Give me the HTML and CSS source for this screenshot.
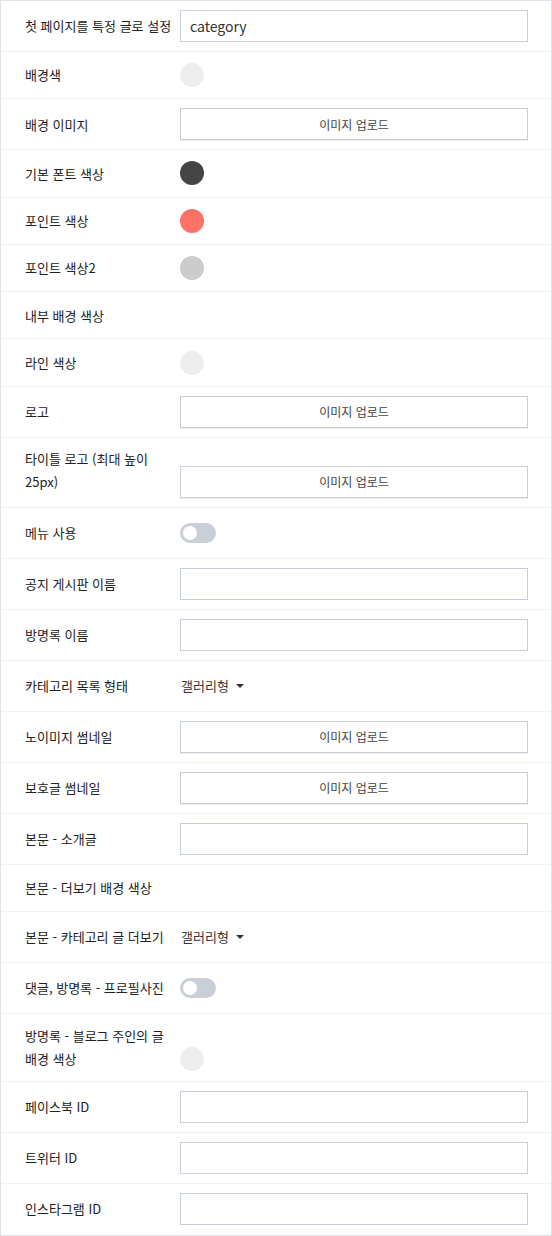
FILE: index.html
```html
<!DOCTYPE html>
<html lang="ko">
<head>
<meta charset="utf-8">
<title>스킨 설정</title>
<link rel="stylesheet" href="styles.css">
</head>
<body>
<div class="panel">
  <div class="row"><div class="label">첫 페이지를 특정 글로 설정</div><div class="control"><input class="field" type="text" value="category"></div></div>
  <div class="row"><div class="label">배경색</div><div class="control"><span class="swatch-wrap"><span class="swatch swatch--light"></span></span></div></div>
  <div class="row"><div class="label">배경 이미지</div><div class="control"><button class="upload" type="button">이미지 업로드</button></div></div>
  <div class="row"><div class="label">기본 폰트 색상</div><div class="control"><span class="swatch-wrap"><span class="swatch swatch--dark"></span></span></div></div>
  <div class="row"><div class="label">포인트 색상</div><div class="control"><span class="swatch-wrap"><span class="swatch swatch--coral"></span></span></div></div>
  <div class="row"><div class="label">포인트 색상2</div><div class="control"><span class="swatch-wrap"><span class="swatch swatch--gray"></span></span></div></div>
  <div class="row"><div class="label">내부 배경 색상</div><div class="control"><span class="swatch-wrap"></span></div></div>
  <div class="row"><div class="label">라인 색상</div><div class="control"><span class="swatch-wrap"><span class="swatch swatch--light"></span></span></div></div>
  <div class="row"><div class="label">로고</div><div class="control"><button class="upload" type="button">이미지 업로드</button></div></div>
  <div class="row row--multi"><div class="label">타이틀 로고 (최대 높이 25px)</div><div class="control"><button class="upload" type="button">이미지 업로드</button></div></div>
  <div class="row"><div class="label">메뉴 사용</div><div class="control"><span class="toggle-wrap"><span class="toggle"><span class="knob"></span></span></span></div></div>
  <div class="row"><div class="label">공지 게시판 이름</div><div class="control"><input class="field" type="text" value=""></div></div>
  <div class="row"><div class="label">방명록 이름</div><div class="control"><input class="field" type="text" value=""></div></div>
  <div class="row"><div class="label">카테고리 목록 형태</div><div class="control"><span class="select">갤러리형<span class="caret"></span></span></div></div>
  <div class="row"><div class="label">노이미지 썸네일</div><div class="control"><button class="upload" type="button">이미지 업로드</button></div></div>
  <div class="row"><div class="label">보호글 썸네일</div><div class="control"><button class="upload" type="button">이미지 업로드</button></div></div>
  <div class="row"><div class="label">본문 - 소개글</div><div class="control"><input class="field" type="text" value=""></div></div>
  <div class="row"><div class="label">본문 - 더보기 배경 색상</div><div class="control"><span class="swatch-wrap"></span></div></div>
  <div class="row"><div class="label">본문 - 카테고리 글 더보기</div><div class="control"><span class="select">갤러리형<span class="caret"></span></span></div></div>
  <div class="row"><div class="label">댓글, 방명록 - 프로필사진</div><div class="control"><span class="toggle-wrap"><span class="toggle"><span class="knob"></span></span></span></div></div>
  <div class="row row--multi row--swatch"><div class="label">방명록 - 블로그 주인의 글 배경 색상</div><div class="control"><span class="swatch-wrap"><span class="swatch swatch--light"></span></span></div></div>
  <div class="row"><div class="label">페이스북 ID</div><div class="control"><input class="field" type="text" value=""></div></div>
  <div class="row"><div class="label">트위터 ID</div><div class="control"><input class="field" type="text" value=""></div></div>
  <div class="row"><div class="label">인스타그램 ID</div><div class="control"><input class="field" type="text" value=""></div></div>
</div>
</body>
</html>
```

FILE: styles.css
```css
* { box-sizing: border-box; }

html, body {
  margin: 0;
  padding: 0;
  background: #fff;
}

body {
  font-family: "Noto Sans CJK KR", "Noto Sans", sans-serif;
  font-size: 13px;
  color: #222;
}

.panel {
  width: 552px;
  height: 1236px;
  border: 1px solid #dde2ea;
  background: #fff;
  overflow: hidden;
}

.row {
  display: flex;
  align-items: center;
  padding: 9px 23px 9px 24px;
  border-bottom: 1px solid #eef0f3;
}

.row:last-child {
  border-bottom: 0;
}

.row--multi {
  align-items: last baseline;
}

.row--swatch {
  align-items: flex-end;
  padding-top: 10px;
  padding-bottom: 10px;
}

.label {
  width: 155px;
  flex: none;
  padding-right: 6px;
  line-height: 23.4px;
  word-break: keep-all;
  color: #222;
}

.control {
  flex: 1;
  min-width: 0;
  display: flex;
  align-items: center;
}

.row--multi .control {
  display: block;
}

.field {
  display: block;
  width: 100%;
  height: 32px;
  margin: 0;
  padding: 0 9px;
  border: 1px solid #c6ced8;
  border-radius: 0;
  background: #fff;
  font-family: "Noto Sans CJK KR", "Noto Sans", sans-serif;
  font-size: 14px;
  color: #333;
  outline: none;
}

.upload {
  display: block;
  width: 100%;
  height: 32px;
  margin: 0;
  padding: 0;
  border: 1px solid #c6ced8;
  border-radius: 0;
  background: #fff;
  box-shadow: 0 1px 1px rgba(0, 0, 0, 0.06);
  font-family: "Noto Sans CJK KR", "Noto Sans", sans-serif;
  font-size: 12px;
  color: #444;
}

.swatch-wrap {
  display: flex;
  align-items: center;
  height: 28.3px;
}

.row--swatch .swatch-wrap {
  height: 24px;
}

.swatch {
  display: block;
  width: 24px;
  height: 24px;
  border-radius: 50%;
}

.swatch--light { background: #eeeeee; }
.swatch--dark { background: #444444; }
.swatch--coral { background: #fd7166; }
.swatch--gray { background: #cccccc; }

.toggle-wrap {
  display: flex;
  align-items: center;
  height: 32px;
}

.toggle {
  display: block;
  position: relative;
  width: 36px;
  height: 20px;
  border-radius: 10px;
  background: #c9cfd8;
}

.knob {
  position: absolute;
  left: 3px;
  top: 3px;
  width: 14px;
  height: 14px;
  border-radius: 50%;
  background: #fff;
}

.select {
  display: flex;
  align-items: center;
  height: 32px;
  padding-left: 1px;
  font-size: 13px;
  color: #333;
}

.caret {
  display: inline-block;
  width: 0;
  height: 0;
  margin-left: 7px;
  border-left: 4px solid transparent;
  border-right: 4px solid transparent;
  border-top: 4px solid #333;
}
```
